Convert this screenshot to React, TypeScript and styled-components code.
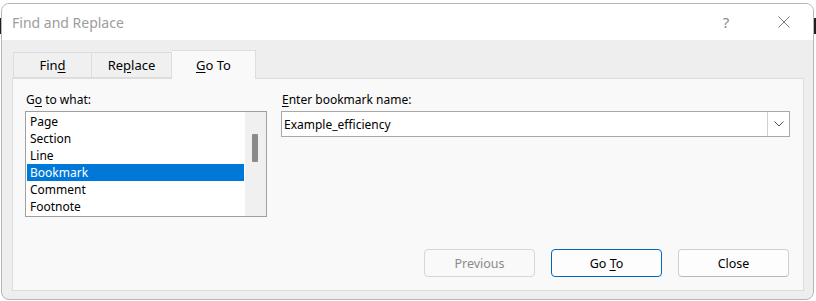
import React from 'react';
import styled, { createGlobalStyle } from 'styled-components';

const GlobalStyle = createGlobalStyle`
  html, body { margin: 0; padding: 0; }
  body {
    background: #ffffff;
    font-family: "Noto Sans", "Open Sans", sans-serif;
    font-size: 12px;
    color: #1a1a1a;
  }
  * { box-sizing: border-box; }
`;

const Desktop = styled.div`
  width: 816px;
  height: 301px;
  overflow: hidden;
  padding: 3px 0 0 1px;
  background: linear-gradient(
    to bottom,
    #ffffff 0,
    #ffffff 18px,
    #1f1f1f 18px,
    #1f1f1f 34px,
    #ffffff 34px
  );
`;

const Window = styled.div`
  width: 813px;
  height: 297px;
  border: 1px solid #b6b6b6;
  border-radius: 8px;
  overflow: hidden;
  background: #eeeeee;
  display: flex;
  flex-direction: column;
`;

const TitleBar = styled.div`
  height: 36px;
  flex-shrink: 0;
  background: #ffffff;
  display: flex;
  align-items: center;
  padding-left: 10px;
`;

const Title = styled.span`
  font-size: 14px;
  color: #9d9d9d;
`;

const CaptionButtons = styled.div`
  margin-left: auto;
  display: flex;
  height: 100%;
`;

const CaptionButton = styled.div`
  width: 58px;
  height: 100%;
  display: flex;
  align-items: center;
  justify-content: center;
  color: #8a8a8a;
  font-size: 15px;
`;

const Body = styled.div`
  flex: 1;
  display: flex;
  flex-direction: column;
  padding: 10px 9px 8px 10px;
`;

const TabStrip = styled.div`
  display: flex;
  align-items: flex-end;
  height: 28px;
  padding-left: 1px;
  position: relative;
  z-index: 1;
`;

const Tab = styled.div<{ $active?: boolean; $w: number }>`
  width: ${(p) => p.$w}px;
  height: ${(p) => (p.$active ? 29 : 26)}px;
  margin-bottom: ${(p) => (p.$active ? -1 : 0)}px;
  background: ${(p) => (p.$active ? '#f9f9f9' : '#f0f0f0')};
  border: 1px solid #dddddd;
  border-bottom: ${(p) => (p.$active ? 'none' : '1px solid #dddddd')};
  display: flex;
  align-items: center;
  justify-content: center;
  font-size: 13px;
  color: #000;
  padding-bottom: ${(p) => (p.$active ? 1 : 0)}px;
  & + & {
    border-left: none;
  }
`;

const Panel = styled.div`
  flex: 1;
  background: #f9f9f9;
  border: 1px solid #dddddd;
  display: flex;
  flex-direction: column;
  padding: 13px 12px 13px 12px;
`;

const Columns = styled.div`
  display: flex;
  gap: 14px;
`;

const Column = styled.div<{ $w: number }>`
  width: ${(p) => p.$w}px;
  display: flex;
  flex-direction: column;
`;

const Label = styled.div`
  height: 16px;
  line-height: 16px;
  margin-bottom: 3px;
  padding-left: 1px;
  color: #000;
`;

const ListBox = styled.div`
  height: 106px;
  border: 1px solid #a0a0a0;
  background: #ffffff;
  display: flex;
`;

const Items = styled.div`
  flex: 1;
  padding: 1px;
  overflow: hidden;
`;

const Item = styled.div<{ $selected?: boolean }>`
  height: 17px;
  line-height: 17px;
  padding-left: 3px;
  background: ${(p) => (p.$selected ? '#0078d7' : 'transparent')};
  color: ${(p) => (p.$selected ? '#ffffff' : '#000000')};
  white-space: nowrap;
`;

const Scrollbar = styled.div`
  width: 21px;
  background: #f0f0f0;
  padding-top: 22px;
  display: flex;
  justify-content: center;
`;

const Thumb = styled.div`
  width: 6px;
  height: 28px;
  background: #8a8a8a;
  border-radius: 1px;
  margin-left: -2px;
`;

const Combo = styled.div`
  height: 26px;
  border: 1px solid #a8a8a8;
  background: #ffffff;
  display: flex;
  align-items: stretch;
`;

const ComboText = styled.div`
  flex: 1;
  padding-left: 2px;
  display: flex;
  align-items: center;
  color: #000;
`;

const DropButton = styled.div`
  width: 22px;
  border-left: 1px solid #d0d0d0;
  display: flex;
  align-items: center;
  justify-content: center;
  background: #ffffff;
`;

const ButtonRow = styled.div`
  margin-top: auto;
  display: flex;
  justify-content: flex-end;
  gap: 16px;
  padding-right: 2px;
`;

const Button = styled.div<{ $variant?: 'default' | 'primary' | 'disabled' }>`
  width: 111px;
  height: 28px;
  border-radius: 4px;
  display: flex;
  align-items: center;
  justify-content: center;
  font-size: 12.5px;
  background: ${(p) => (p.$variant === 'disabled' ? '#f9f9f9' : '#fdfdfd')};
  color: ${(p) => (p.$variant === 'disabled' ? '#8a8a8a' : '#000000')};
  border: 1px solid
    ${(p) =>
      p.$variant === 'primary'
        ? '#0067c0'
        : p.$variant === 'disabled'
        ? '#d6d6d6'
        : '#d0d0d0'};
  border-bottom-color: ${(p) =>
    p.$variant === 'primary' ? '#0067c0' : p.$variant === 'disabled' ? '#d6d6d6' : '#b8b8b8'};
`;

const U = styled.span`
  text-decoration: underline;
  text-underline-offset: 2px;
`;

const items = ['Page', 'Section', 'Line', 'Bookmark', 'Comment', 'Footnote'];

export default function App() {
  return (
    <>
      <GlobalStyle />
      <Desktop>
        <Window>
          <TitleBar>
            <Title>Find and Replace</Title>
            <CaptionButtons>
              <CaptionButton>?</CaptionButton>
              <CaptionButton>
                <svg width="12" height="12" viewBox="0 0 12 12">
                  <path d="M0.5 0.5 L11.5 11.5 M11.5 0.5 L0.5 11.5" stroke="#7a7a7a" strokeWidth="1" fill="none" />
                </svg>
              </CaptionButton>
            </CaptionButtons>
          </TitleBar>
          <Body>
            <TabStrip>
              <Tab $w={79}>
                <span>
                  Fin<U>d</U>
                </span>
              </Tab>
              <Tab $w={80}>
                <span>
                  Re<U>p</U>lace
                </span>
              </Tab>
              <Tab $w={84} $active>
                <span>
                  <U>G</U>o To
                </span>
              </Tab>
            </TabStrip>
            <Panel>
              <Columns>
                <Column $w={242}>
                  <Label>
                    G<U>o</U> to what:
                  </Label>
                  <ListBox>
                    <Items>
                      {items.map((it) => (
                        <Item key={it} $selected={it === 'Bookmark'}>
                          {it}
                        </Item>
                      ))}
                    </Items>
                    <Scrollbar>
                      <Thumb />
                    </Scrollbar>
                  </ListBox>
                </Column>
                <Column $w={509}>
                  <Label>
                    <U>E</U>nter bookmark name:
                  </Label>
                  <Combo>
                    <ComboText>Example_efficiency</ComboText>
                    <DropButton>
                      <svg width="10" height="6" viewBox="0 0 10 6">
                        <path d="M0.5 0.5 L5 5 L9.5 0.5" stroke="#555" strokeWidth="1" fill="none" />
                      </svg>
                    </DropButton>
                  </Combo>
                </Column>
              </Columns>
              <ButtonRow>
                <Button $variant="disabled">Previous</Button>
                <Button $variant="primary">
                  <span>
                    Go <U>T</U>o
                  </span>
                </Button>
                <Button>Close</Button>
              </ButtonRow>
            </Panel>
          </Body>
        </Window>
      </Desktop>
    </>
  );
}
